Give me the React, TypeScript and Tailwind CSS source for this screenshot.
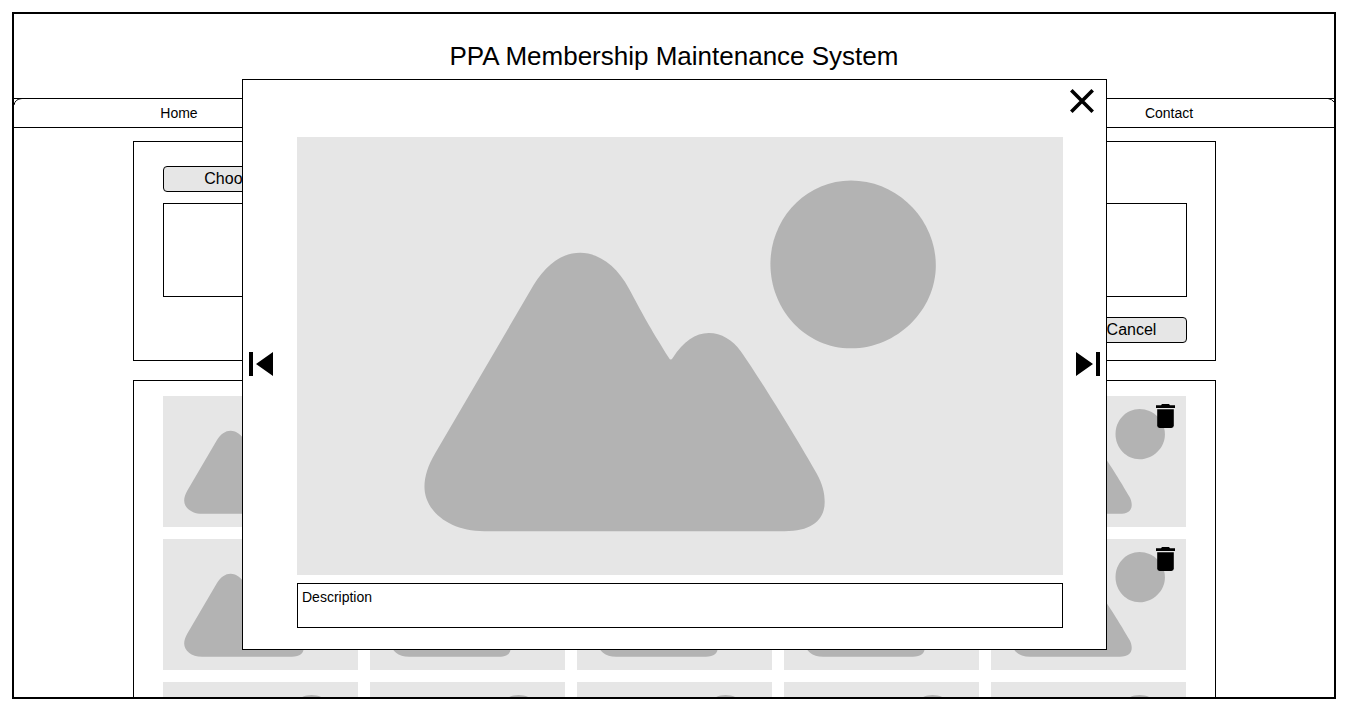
import React from "react";

function Placeholder({ className }: { className: string }) {
  return (
    <svg
      viewBox="0 0 765 438"
      preserveAspectRatio="xMidYMid slice"
      className={className}
      role="img"
      aria-label="Photo"
    >
      <rect width="765" height="438" fill="#e6e6e6" />
      <path
        fill="#b3b3b3"
        d="M553.3 43.7C599 43.7 638 82 638 128.5C638 173 599 211.3 553.3 211.3C508 211.3 472.8 173 472.8 127C472.8 82 508 43.7 553.3 43.7Z"
      />
      <path
        fill="#b3b3b3"
        d="M138 316 L236 148.7 C249 127 265 116 282.8 116 C302 116 320 130 331.3 151.3 C344 175 352 190 371.5 221 Q373.2 224 375.2 221 C386 204 398 196 411.2 196 C424 196 435 203 443 214 C460 238 499 301 519 336.3 C525 347 527 356 527 364.7 C527 382 515 394 487 394 L187 394 C151 394 127.3 373 127.3 349.5 C127.3 339 131 328 138 316Z"
      />
    </svg>
  );
}

function TrashIcon() {
  return (
    <svg viewBox="0 0 19 24" className="block h-6 w-[19px]" aria-hidden="true">
      <path d="M0 1.2h5L6 0h7l1 1.2h5V4H0z" />
      <path d="M1.2 5.2h16.6V21.6a2.4 2.4 0 0 1-2.4 2.4H3.6a2.4 2.4 0 0 1-2.4-2.4z" />
    </svg>
  );
}

function PhotoTile({ removable }: { removable: boolean }) {
  return (
    <li className="relative">
      <Placeholder className="block h-[131px] w-full" />
      {removable && (
        <button type="button" aria-label="Delete photo" className="absolute top-2 right-[11px]">
          <TrashIcon />
        </button>
      )}
    </li>
  );
}

function PhotoDialog() {
  return (
    <div
      role="dialog"
      aria-label="Photo viewer"
      className="relative flex w-full items-center border border-black bg-white"
    >
      <button type="button" aria-label="Close" className="absolute top-[9px] right-3">
        <svg viewBox="0 0 24 24" className="block size-6" aria-hidden="true">
          <path d="M1.3 1.3L22.7 22.7M22.7 1.3L1.3 22.7" stroke="#000" strokeWidth="3.6" />
        </svg>
      </button>
      <div className="w-[54px] shrink-0 pb-0.5 pl-1.5">
        <button type="button" aria-label="Previous photo" className="block">
          <svg viewBox="0 0 24 24" className="block size-6" aria-hidden="true">
            <path d="M0 0h4v24H0zM24 0v24L7 12z" />
          </svg>
        </button>
      </div>
      <div className="flex min-w-0 flex-1 flex-col gap-2 pt-[57px] pb-[21px]">
        <Placeholder className="block h-[438px] w-full" />
        <textarea
          aria-label="Description"
          defaultValue="Description"
          className="block h-[45px] w-full resize-none overflow-hidden border border-black bg-white px-1 pt-[3px] text-sm leading-5 outline-none"
        />
      </div>
      <div className="flex w-[43px] shrink-0 justify-end pr-1.5 pb-0.5">
        <button type="button" aria-label="Next photo" className="block">
          <svg viewBox="0 0 24 24" className="block size-6" aria-hidden="true">
            <path d="M20 0h4v24h-4zM0 0v24L17 12z" />
          </svg>
        </button>
      </div>
    </div>
  );
}

export default function App() {
  return (
    <div className="h-screen bg-white pt-3 pr-[13px] pb-[7px] pl-3 font-['Liberation_Sans',Arial,sans-serif] text-black">
      <div className="relative h-full overflow-hidden border-2 border-black">
        <header>
          <div className="flex h-[84px] items-center justify-center">
            <h1 className="text-[26px] leading-8">PPA Membership Maintenance System</h1>
          </div>
          <nav className="relative border-y border-black">
            <svg viewBox="0 0 8 8" className="absolute -top-px left-0 size-2" aria-hidden="true">
              <path d="M0 7Q1 1 8 .5" fill="none" stroke="#000" />
            </svg>
            <svg viewBox="0 0 8 8" className="absolute -top-px right-0 size-2" aria-hidden="true">
              <path d="M2 .5Q6 1 8 4" fill="none" stroke="#000" />
            </svg>
            <ul className="grid grid-cols-4 text-center text-sm leading-7">
              <li>
                <a href="#home">Home</a>
              </li>
              <li className="col-start-4">
                <a href="#contact">Contact</a>
              </li>
            </ul>
          </nav>
        </header>

        <main className="flex flex-col gap-[19px] pt-[13px] pr-[118px] pl-[119px]">
          <section className="flex flex-col border border-black pt-6 pr-7 pb-[17px] pl-[29px]">
            <button
              type="button"
              className="h-[26px] w-[168px] rounded border border-black bg-[#e6e6e6] text-base leading-6"
            >
              Choose File
            </button>
            <textarea
              aria-label="Selected photos"
              className="mt-[11px] block h-[94px] w-full resize-none border border-black bg-white outline-none"
            />
            <button
              type="button"
              className="mt-5 h-[26px] w-[111px] self-end rounded border border-black bg-[#e6e6e6] text-base leading-6"
            >
              Cancel
            </button>
          </section>

          <section className="border border-black px-[29px] py-[15px]">
            <ul className="grid grid-cols-5 gap-3">
              {Array.from({ length: 15 }, (_, i) => (
                <PhotoTile key={i} removable={i < 10} />
              ))}
            </ul>
          </section>
        </main>

        <div className="absolute inset-x-0 top-[65px] pr-[227px] pl-[228px]">
          <PhotoDialog />
        </div>
      </div>
    </div>
  );
}
